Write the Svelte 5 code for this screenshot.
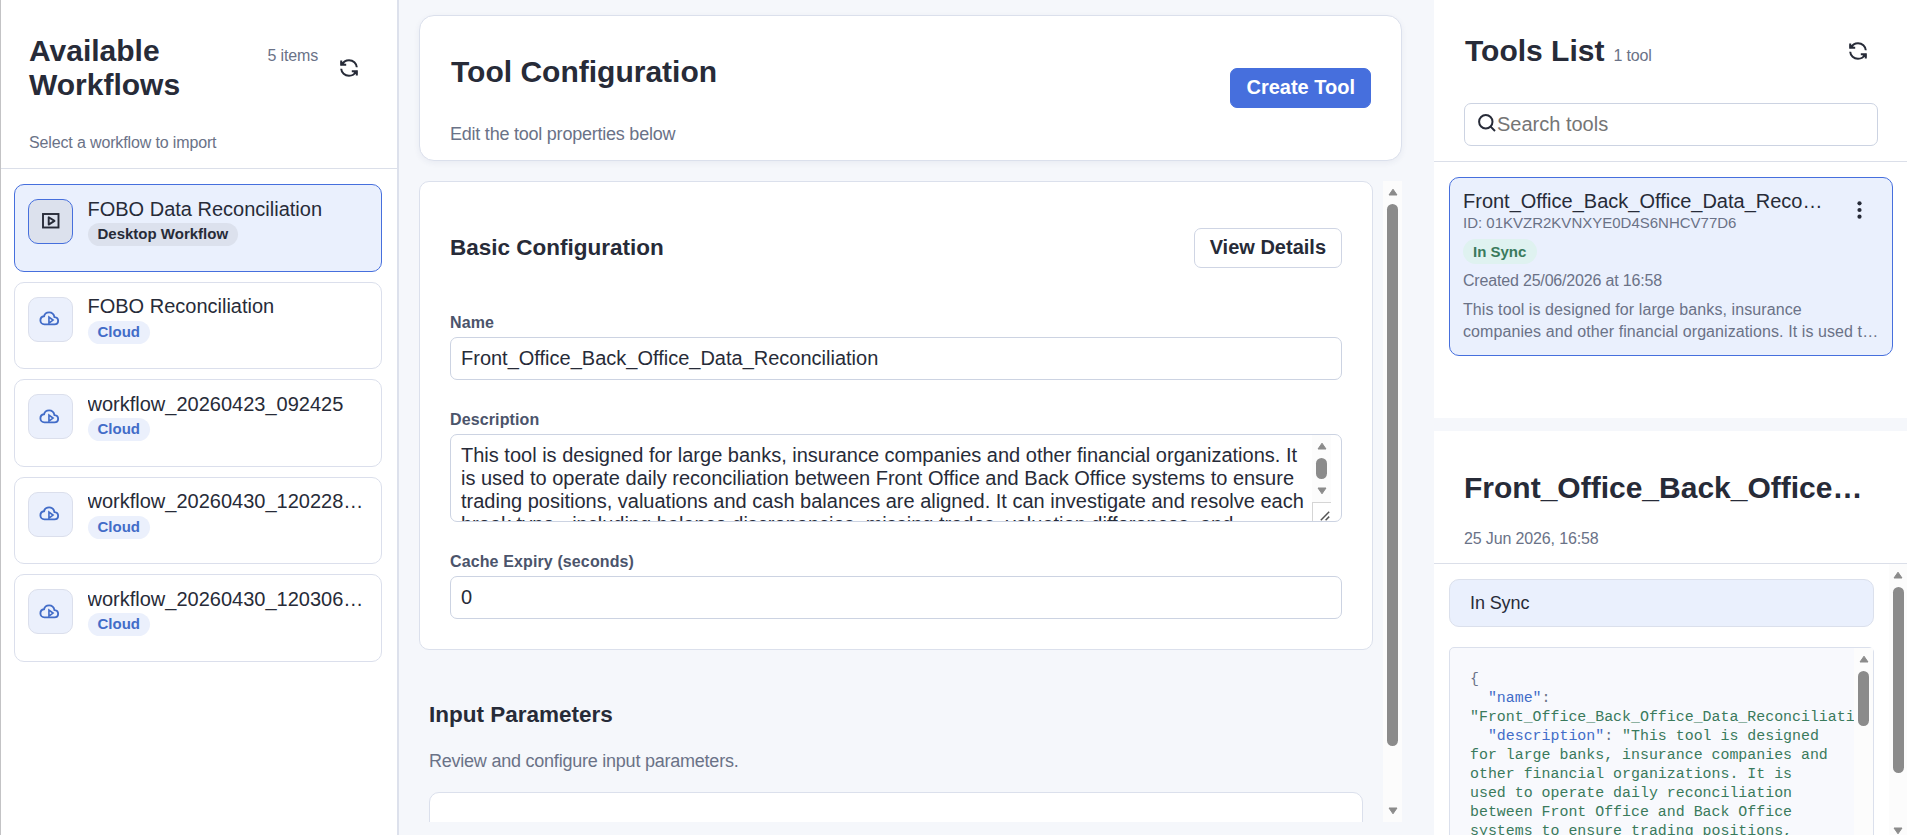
<script>
  const workflows = [
    { name: "FOBO Data Reconciliation", kind: "desktop", label: "Desktop Workflow" },
    { name: "FOBO Reconciliation", kind: "cloud", label: "Cloud" },
    { name: "workflow_20260423_092425", kind: "cloud", label: "Cloud" },
    { name: "workflow_20260430_120228_copy", kind: "cloud", label: "Cloud" },
    { name: "workflow_20260430_120306_copy", kind: "cloud", label: "Cloud" },
  ];

  const toolName = "Front_Office_Back_Office_Data_Reconciliation";

  const description = [
    "This tool is designed for large banks, insurance companies and other financial organizations. It",
    "is used to operate daily reconciliation between Front Office and Back Office systems to ensure",
    "trading positions, valuations and cash balances are aligned. It can investigate and resolve each",
    "break type - including balance discrepancies, missing trades, valuation differences, and",
  ];

  const code = [
    [["", "{"]],
    [["key", '  "name"'], ["", ":"]],
    [["str", '"Front_Office_Back_Office_Data_Reconciliation"'], ["", ","]],
    [["key", '  "description"'], ["", ": "], ["str", '"This tool is designed']],
    [["str", "for large banks, insurance companies and"]],
    [["str", "other financial organizations. It is"]],
    [["str", "used to operate daily reconciliation"]],
    [["str", "between Front Office and Back Office"]],
    [["str", "systems to ensure trading positions,"]],
  ];

  let selected = $state(0);
</script>

{#snippet refresh()}
  <button class="icon-btn" aria-label="Refresh">
    <svg width="18" height="18" viewBox="0 0 18 18" fill="none" stroke="currentColor" stroke-width="2">
      <path d="M1.2 1.4v4.400h5M1.800 5.600C3.300 2.800 5.900 1.200 9 1.200c4.200 0 7.500 2.900 7.800 7.100" />
      <path d="M16.800 16.600v-4.400h-5M16.200 12.400c-1.500 2.800-4.100 4.400-7.200 4.400-4.200 0-7.500-2.900-7.800-7.100" />
      <path d="M1.200 5.800V3.200l3 1.600zM16.800 12.200v2.600l-3-1.600z" fill="currentColor" stroke-width="1" />
    </svg>
  </button>
{/snippet}

{#snippet scrollbar(thumb, down)}
  <div class="scrollbar">
    <svg class="arrow" width="10" height="8" viewBox="0 0 10 8"><path d="M5 1.200 9 7H1z" /></svg>
    <div class="thumb" style="height: {thumb}px"></div>
    {#if down}
      <svg class="arrow down" width="10" height="8" viewBox="0 0 10 8"><path d="M5 6.800 1 1h8z" /></svg>
    {/if}
  </div>
{/snippet}

<div class="app">
  <aside class="workflows">
    <header class="panel-head left-head">
      <div class="head-row">
        <div class="head-title">
          <h2>Available Workflows</h2>
          <span class="count">5 items</span>
        </div>
        {@render refresh()}
      </div>
      <p class="hint">Select a workflow to import</p>
    </header>
    <div class="workflow-list">
      {#each workflows as item, i}
        <button class="workflow {item.kind}" class:selected={i === selected} onclick={() => (selected = i)}>
          <span class="workflow-icon">
            {#if item.kind === "desktop"}
              <svg width="18" height="16" viewBox="0 0 18 16" fill="none" stroke="currentColor" stroke-width="1.9">
                <rect x="1" y="1" width="15.500" height="13.500" />
                <path d="M6.700 4.200v7.400l5.800-3.700z" stroke-linejoin="round" />
              </svg>
            {:else}
              <svg width="21" height="15" viewBox="0 0 22 16" fill="none" stroke="currentColor" stroke-width="2">
                <path d="M5.600 14.300h10.600c2.400 0 4-1.700 4-3.800 0-2.200-1.600-3.800-3.900-4C15.700 3.600 13.500 1.400 10.600 1.400 7.800 1.400 5.700 3 5.200 5.600 2.900 5.900 1.300 7.700 1.300 9.900c0 2.500 1.800 4.400 4.300 4.400z" />
                <path d="M10.400 6.400v6.600l4.400-3.300z" stroke-width="1.700" />
              </svg>
            {/if}
          </span>
          <span class="workflow-text">
            <span class="workflow-name">{item.name}</span>
            <span class="badge">{item.label}</span>
          </span>
        </button>
      {/each}
    </div>
  </aside>

  <main>
    <section class="config-head">
      <div class="config-title">
        <h2>Tool Configuration</h2>
        <p>Edit the tool properties below</p>
      </div>
      <button class="btn primary">Create Tool</button>
    </section>

    <div class="config-scroll">
      <div class="config-body">
        <section class="card">
          <div class="card-head">
            <h3>Basic Configuration</h3>
            <button class="btn">View Details</button>
          </div>
          <label for="name">Name</label>
          <input id="name" type="text" value={toolName} />
          <label for="description">Description</label>
          <div id="description" class="textarea" role="textbox">
            <div class="textarea-text">
              {#each description as line}
                <div>{line}</div>
              {/each}
            </div>
            <div class="textarea-side">
              {@render scrollbar(21, true)}
              <div class="grip">
                <svg width="10" height="10" viewBox="0 0 10 10" stroke="#555" stroke-width="1.5">
                  <path d="M.8 9.200 9.200.8M5.600 9.200l3.600-3.600" />
                </svg>
              </div>
            </div>
          </div>
          <label for="cache">Cache Expiry (seconds)</label>
          <input id="cache" type="text" value="0" />
        </section>

        <section class="params">
          <h3>Input Parameters</h3>
          <p>Review and configure input parameters.</p>
          <div class="params-box"></div>
        </section>
      </div>
      {@render scrollbar(542, true)}
    </div>
  </main>

  <aside class="tools">
    <section class="tools-list">
      <header class="panel-head tools-head">
        <div class="head-row">
          <div class="head-title">
            <h2>Tools List</h2>
            <span class="count">1 tool</span>
          </div>
          {@render refresh()}
        </div>
        <div class="search">
          <svg width="18" height="18" viewBox="0 0 18 18" fill="none" stroke="#272b38" stroke-width="2">
            <circle cx="7.800" cy="7.800" r="6.700" />
            <path d="m12.600 12.600 4.400 4.400" />
          </svg>
          <input type="text" placeholder="Search tools" />
        </div>
      </header>
      <article class="tool">
        <div class="tool-top">
          <div class="tool-id">
            <div class="tool-name">{toolName}</div>
            <div class="tool-key">ID: 01KVZR2KVNXYE0D4S6NHCV77D6</div>
          </div>
          <svg class="kebab" width="5" height="18" viewBox="0 0 5 18" fill="#272b38">
            <circle cx="2.500" cy="2.300" r="2.100" />
            <circle cx="2.500" cy="9" r="2.100" />
            <circle cx="2.500" cy="15.700" r="2.100" />
          </svg>
        </div>
        <span class="badge sync">In Sync</span>
        <p class="created">Created 25/06/2026 at 16:58</p>
        <p class="tool-desc">This tool is designed for large banks, insurance<br />companies and other financial organizations. It is used t…</p>
      </article>
    </section>

    <section class="detail">
      <header class="detail-head">
        <h2>{toolName}</h2>
        <p>25 Jun 2026, 16:58</p>
      </header>
      <div class="detail-scroll">
        <div class="detail-body">
          <div class="status">In Sync</div>
          <div class="code">
            <div class="code-text">
              {#each code as line}
                <div class="code-line">{#each line as [cls, text]}<span class={cls}>{text}</span>{/each}</div>
              {/each}
            </div>
            {@render scrollbar(55, false)}
          </div>
        </div>
        {@render scrollbar(186, true)}
      </div>
    </section>
  </aside>
</div>

<style>
  :global(body) {
    margin: 0;
    overflow: hidden;
  }

  * {
    box-sizing: border-box;
  }

  h2,
  h3,
  p {
    margin: 0;
  }

  button,
  input {
    font-family: inherit;
    color: inherit;
  }

  .app {
    display: grid;
    grid-template-columns: 399px 1fr 473px;
    grid-template-rows: 835px;
    height: 835px;
    background: #f5f7fb;
    color: #272b38;
    font-family: "Liberation Sans", Arial, sans-serif;
    font-size: 20px;
    overflow: hidden;
  }

  h2 {
    font-size: 30px;
    line-height: 34px;
  }

  h3 {
    font-size: 22.5px;
    line-height: 26px;
  }

  /* left panel */

  .workflows {
    background: #fff;
    border-left: 1px solid #c3c3c5;
    border-right: 2px solid #dde1ec;
  }

  .panel-head {
    padding: 34px 29px 0 28px;
    border-bottom: 1px solid #dbdfe9;
  }

  .left-head {
    height: 169px;
  }

  .head-row {
    display: flex;
    align-items: center;
    justify-content: space-between;
  }

  .head-title {
    display: flex;
    align-items: baseline;
    gap: 9px;
  }

  .left-head .head-title {
    width: 289px;
    justify-content: space-between;
  }

  .left-head h2 {
    width: 180px;
  }

  .count,
  .hint {
    font-size: 16px;
    line-height: 18px;
    letter-spacing: -0.14px;
    color: #6a7287;
    white-space: nowrap;
  }

  .hint {
    margin-top: 32px;
  }

  .icon-btn {
    display: flex;
    padding: 0;
    margin-right: 10px;
    border: 0;
    background: none;
  }

  .workflow-list {
    display: flex;
    flex-direction: column;
    gap: 10px;
    padding: 15px 15px 0 13px;
  }

  .workflow {
    display: flex;
    gap: 14.5px;
    height: 87.6px;
    padding: 14px 13px;
    border: 1px solid #dbdfec;
    border-radius: 10px;
    background: #fff;
    text-align: left;
  }

  .workflow.selected {
    background: #eaf0fd;
    border-color: #466fdd;
  }

  .workflow-icon {
    display: flex;
    align-items: center;
    justify-content: center;
    flex: none;
    width: 45px;
    height: 45px;
    border: 1px solid #dbdfec;
    border-radius: 10px;
    background: #ebf0fc;
    color: #426cc8;
  }

  .cloud .workflow-icon {
    padding: 0 2px 1px 0;
  }

  .desktop .workflow-icon {
    padding-bottom: 1px;
    background: #dce1ed;
    color: #272b38;
  }

  .selected .workflow-icon {
    border-color: #466fdd;
  }

  .workflow-text {
    display: flex;
    flex-direction: column;
    align-items: flex-start;
    gap: 2.4px;
    min-width: 0;
    flex: 1;
  }

  .workflow-name {
    width: 100%;
    padding-right: 4px;
    margin-top: -1.4px;
    font-size: 20px;
    line-height: 23px;
    white-space: nowrap;
    overflow: hidden;
    text-overflow: ellipsis;
  }

  .badge {
    display: inline-block;
    height: 23px;
    padding: 0 10px;
    border-radius: 12px;
    background: #ebf0fc;
    color: #426cc8;
    font-size: 15px;
    font-weight: bold;
    line-height: 22px;
    white-space: nowrap;
  }

  .desktop .badge {
    background: #dce1ed;
    color: #272b38;
  }

  /* middle column */

  main {
    display: flex;
    flex-direction: column;
    gap: 20px;
    min-width: 0;
    min-height: 0;
    padding: 15px 32px 13px 20px;
  }

  .config-head {
    display: flex;
    align-items: center;
    justify-content: space-between;
    flex: none;
    height: 146px;
    padding: 0 30px 0 31px;
    border: 1px solid #dbe0ec;
    border-radius: 15px;
    background: #fff;
    box-shadow: 0 2px 6px rgba(40, 55, 100, 0.06);
  }

  .config-title {
    align-self: flex-start;
    padding-top: 39px;
  }

  .config-title p,
  .params p {
    font-size: 18px;
    line-height: 20px;
    letter-spacing: -0.23px;
    color: #6a7287;
  }

  .config-title p {
    margin: 35px 0 0 -1px;
  }

  .btn {
    height: 40px;
    padding: 0 15px 2px;
    border: 1px solid #cfd5e4;
    border-radius: 7px;
    background: #fff;
    font-size: 20px;
    font-weight: bold;
  }

  .btn.primary {
    border-color: #466fdd;
    background: #466fdd;
    color: #fff;
  }

  .config-scroll {
    display: flex;
    flex: 1;
    justify-content: space-between;
    min-height: 0;
    overflow: hidden;
  }

  .config-body {
    width: 954px;
  }

  .card {
    height: 469px;
    padding: 46px 30px 0 30px;
    border: 1px solid #dbe0ec;
    border-radius: 10px;
    background: #fff;
  }

  .card-head {
    display: flex;
    align-items: center;
    justify-content: space-between;
    margin-bottom: 46px;
  }

  label {
    display: block;
    margin-bottom: 5px;
    font-size: 16px;
    font-weight: bold;
    line-height: 18px;
    letter-spacing: 0.12px;
    color: #4b546b;
  }

  .card input,
  .textarea {
    display: block;
    width: 100%;
    height: 43px;
    margin-bottom: 31px;
    padding: 0 10px;
    border: 1px solid #ccd3e2;
    border-radius: 7px;
    background: #fff;
    font-size: 20px;
  }

  .textarea {
    display: flex;
    justify-content: space-between;
    height: 88px;
    line-height: 23px;
    overflow: hidden;
  }

  .textarea-text {
    padding-top: 9px;
    white-space: nowrap;
  }

  .textarea-side {
    display: flex;
    flex-direction: column;
    width: 19px;
  }

  .grip {
    display: flex;
    flex: none;
    align-items: flex-end;
    justify-content: flex-end;
    height: 19px;
    padding-right: 1px;
    border-top: 1px solid #d5d5d5;
    border-left: 1px solid #d5d5d5;
  }

  .params {
    padding: 52px 10px 0;
  }

  .params p {
    margin: 23px 0 21px;
  }

  .params-box {
    height: 200px;
    border: 1px solid #dbe0ec;
    border-radius: 10px;
    background: #fff;
  }

  .scrollbar {
    display: flex;
    flex: none;
    flex-direction: column;
    align-items: center;
    width: 19px;
    padding: 7px 0;
    background: #fcfcfc;
  }

  .arrow {
    flex: none;
    fill: #8b8b8b;
    stroke: #8b8b8b;
    stroke-linejoin: round;
  }

  .arrow.down {
    margin-top: auto;
  }

  .thumb {
    flex: none;
    width: 11px;
    margin-top: 8px;
    border-radius: 6px;
    background: #8b8b8b;
  }

  .textarea-side .scrollbar {
    flex: 1;
  }

  /* right column */

  .tools {
    display: flex;
    flex-direction: column;
    gap: 13px;
    min-width: 0;
    min-height: 0;
  }

  .tools-list {
    flex: none;
    height: 418px;
    background: #fff;
  }

  .tools-head {
    height: 162px;
    padding-left: 30px;
  }

  .tools-head h2 {
    padding-left: 1px;
  }

  .tools-head .icon-btn {
    margin-right: 11px;
  }

  .search {
    display: flex;
    align-items: center;
    height: 43px;
    margin-top: 35px;
    padding-left: 13px;
    border: 1px solid #ccd3e2;
    border-radius: 7px;
  }

  .search svg {
    margin-bottom: 4px;
  }

  .search input {
    flex: 1;
    padding: 0 0 0 1px;
    border: 0;
    outline: 0;
    background: none;
    font-size: 20px;
  }

  .search input::placeholder {
    color: #757575;
  }

  .tool {
    height: 179px;
    margin: 15px 14px 0 15px;
    padding: 12px 13px 0;
    border: 1px solid #466fdd;
    border-radius: 10px;
    background: #eaf0fd;
  }

  .tool-top {
    display: flex;
    justify-content: space-between;
    padding-right: 17px;
    margin-bottom: 6px;
  }

  .tool-name {
    width: 360px;
    line-height: 23px;
    overflow: hidden;
    text-overflow: ellipsis;
  }

  .tool-key {
    font-size: 15px;
    line-height: 20px;
    color: #6a7287;
  }

  .kebab {
    margin-top: 11px;
  }

  .badge.sync {
    display: block;
    width: 74px;
    height: 25px;
    border-radius: 13px;
    line-height: 25px;
    background: #dff2f0;
    color: #3a7a5c;
  }

  .created,
  .tool-desc {
    font-size: 16px;
    line-height: 22px;
    letter-spacing: 0.09px;
    color: #6a7287;
    white-space: nowrap;
  }

  .created {
    margin: 6px 0 7px;
    letter-spacing: -0.18px;
  }

  .detail {
    display: flex;
    flex: 1;
    flex-direction: column;
    min-height: 0;
    background: #fff;
  }

  .detail-head {
    flex: none;
    height: 133px;
    padding: 40px 30px 0;
    border-bottom: 1px solid #dbdfe9;
  }

  .detail-head h2 {
    overflow: hidden;
    text-overflow: ellipsis;
  }

  .detail-head p {
    margin-top: 25px;
    font-size: 16px;
    line-height: 18px;
    letter-spacing: -0.14px;
    color: #6a7287;
  }

  .detail-scroll {
    display: flex;
    flex: 1;
    justify-content: space-between;
    min-height: 0;
  }

  .detail-scroll > .scrollbar {
    width: 18px;
    padding-bottom: 0;
  }

  .detail-body {
    display: flex;
    flex-direction: column;
    gap: 20px;
    width: 440px;
    padding: 15px 0 0 15px;
    overflow: hidden;
  }

  .status {
    flex: none;
    height: 48px;
    padding-left: 20px;
    border: 1px solid #dbe0ec;
    border-radius: 10px;
    background: #eaf0fd;
    font-size: 18px;
    line-height: 46px;
    letter-spacing: -0.1px;
  }

  .code {
    display: flex;
    flex: none;
    height: 400px;
    border: 1px solid #dbe0ec;
    border-radius: 5px;
    background: #f8f9fd;
  }

  .code-text {
    flex: 1;
    min-width: 0;
    padding: 22px 0 0 20px;
    overflow: hidden;
    color: #6a7287;
    font-family: "Liberation Mono", monospace;
    font-size: 14.92px;
  }

  .code-line {
    height: 18.95px;
    line-height: 18.95px;
    white-space: pre;
  }

  .key {
    color: #426cc8;
  }

  .str {
    color: #3a7a5c;
  }
</style>
